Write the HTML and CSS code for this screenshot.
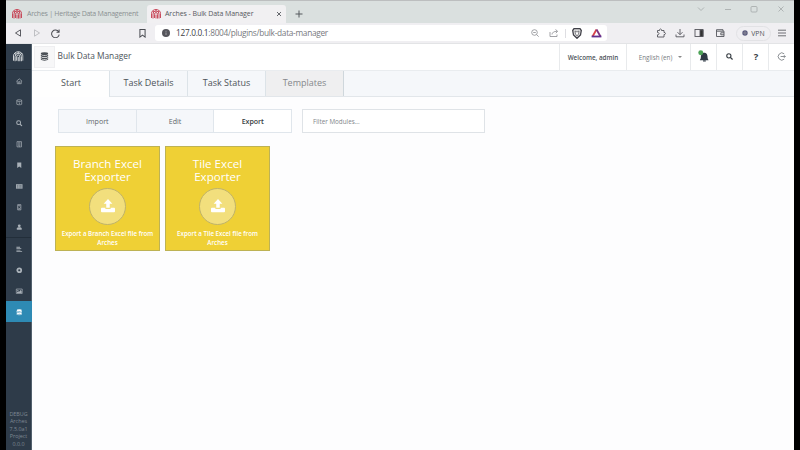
FILE: index.html
```html
<!DOCTYPE html>
<html lang="en">
<head>
<meta charset="utf-8">
<title>Arches - Bulk Data Manager</title>
<link rel="stylesheet" href="styles.css">
</head>
<body>
<svg width="0" height="0" class="defs">
  <symbol id="arch" viewBox="0 0 20 20"><path d="M1 18V9a9 8 0 0 1 18 0v9M4 19V10a6 6 0 0 1 12 0v9M7 18v-7a3 4 0 0 1 6 0v8M10 11v8M3 4l3 2M10 1v4M17 4l-3 2" fill="none" stroke="currentColor" stroke-width="1.9"/></symbol>
  <symbol id="db" viewBox="0 0 16 16"><ellipse cx="8" cy="3" rx="6.5" ry="2.4"/><path d="M1.5 5c2 2 11 2 13 0v2.500c-2 2-11 2-13 0zM1.500 8.700c2 2 11 2 13 0v2.300c-2 2-11 2-13 0zM1.500 12.200c2 2 11 2 13 0V13.500c-2 2.700-11 2.700-13 0z"/></symbol>
  <symbol id="search" viewBox="0 0 16 16"><circle cx="6.500" cy="6.500" r="4.800" fill="none" stroke="currentColor" stroke-width="2.500"/><path d="M10 10l5 5" stroke="currentColor" stroke-width="3"/></symbol>
  <symbol id="upload" viewBox="0 0 16 16"><path d="M8 0l5 5.500h-3V10H6V5.500H3zM1 10h4v1.500h6V10h4a1 1 0 0 1 1 1v3a1 1 0 0 1-1 1H1a1 1 0 0 1-1-1v-3a1 1 0 0 1 1-1z"/></symbol>
</svg>
<div class="window">
  <div class="tabstrip">
    <div class="btab"><svg class="fav"><use href="#arch"/></svg><span class="bt1">Arches | Heritage Data Management</span></div>
    <div class="btab current"><svg class="fav"><use href="#arch"/></svg><span class="bt2">Arches - Bulk Data Manager</span><svg class="close" viewBox="0 0 6 6"><path d="M1 1l4 4M5 1L1 5"/></svg></div>
    <svg class="plus" viewBox="0 0 8 8"><path d="M4 .5v7M.5 4h7"/></svg>
    <div class="controls">
      <svg viewBox="0 0 8 8"><path d="M1 2.500l3 3 3-3"/></svg>
      <svg viewBox="0 0 8 8"><path d="M1 4.500h6"/></svg>
      <svg viewBox="0 0 8 8"><rect x="1" y="1.500" width="6" height="5.500" rx="1"/></svg>
      <svg viewBox="0 0 8 8"><path d="M1.500 1.500l5 5M6.500 1.500l-5 5"/></svg>
    </div>
  </div>
  <div class="toolbar">
    <svg class="nav back" viewBox="0 0 8 8"><path d="M6.500.8v6.400L1.500 4z"/></svg>
    <svg class="nav fwd" viewBox="0 0 8 8"><path d="M1.500.8v6.400L6.500 4z"/></svg>
    <svg class="nav reload" viewBox="0 0 8 8"><path d="M6.800 2.500A3.400 3.400 0 1 0 7.300 5M7.200.5v2.300H4.900"/></svg>
    <svg class="nav mark" viewBox="0 0 8 8"><path d="M1.700.5h4.600v6.700L4 5.500 1.700 7.200z"/></svg>
    <div class="address">
      <svg class="info" viewBox="0 0 8 8"><circle cx="4" cy="4" r="4" fill="#55555b"/><path d="M4 3.500v2.500M4 1.800v1" stroke="#a0a0a5"/></svg>
      <span class="url"><b>127.0.0.1</b>:8004/plugins/bulk-data-manager</span>
      <svg class="zoomout" viewBox="0 0 8 8"><circle cx="3.500" cy="3.500" r="2.800"/><path d="M5.600 5.600L7.700 7.700M2.200 3.500h2.600"/></svg>
      <svg class="share" viewBox="0 0 10 8"><path d="M1 3v4.500h7V5.500M3 5.500c0-2 2-3.200 5-3.200M6.500.5L8.700 2.300 6.800 4.200"/></svg>
      <i class="sep"></i>
      <svg class="shield" viewBox="0 0 10 11"><path d="M2 .7h6l1.300 1.800L8.500 7 5 10.300 1.500 7 .7 2.500z" fill="#ddd" stroke="#414149" stroke-width="1.300"/><path d="M3 3l2 1 2-1-.5 3L5 8 3.500 6z" fill="#fff" stroke="#55555b" stroke-width=".7"/></svg>
      <svg class="bat" viewBox="0 0 11 10"><path d="M5.500 1.500L1.500 8.500" stroke="#d9434a"/><path d="M5.500 1.500l4 7" stroke="#7d3480"/><path d="M.6 8.500h9.800" stroke="#62318e"/></svg>
    </div>
    <div class="tools">
      <svg viewBox="0 0 10 10"><path d="M1.500 2.500h2c-.5-2 2.500-2 2 0h2.500v2c2-.5 2 2.500 0 2v2.500h-6.500V6.800c2 .3 2-2.600 0-2.300z"/></svg>
      <svg viewBox="0 0 10 10"><path d="M5 1v5.500M2.500 4.200L5 6.700l2.500-2.500M1 6.500v2.300h8V6.500"/></svg>
      <svg viewBox="0 0 10 10"><rect x="1" y="1.500" width="8" height="7"/><path d="M6 2h3v6.500H6z" fill="#333"/></svg>
      <svg class="wallet" viewBox="0 0 10 10"><path d="M8 3V1.700H1.500v6.800H9V3.200H1.500M9 4.800H5.800v2H9"/></svg>
    </div>
    <div class="vpn"><svg viewBox="0 0 6 6"><circle cx="3" cy="3" r="2.700" fill="#58587c"/><path d="M.5 3h5M3 .5v5" stroke="#aaa" stroke-width=".5"/></svg><span>VPN</span></div>
    <svg class="burger" viewBox="0 0 8 8"><path d="M0 1.200h8M0 4h8M0 6.800h8"/></svg>
  </div>
  <div class="app">
    <nav class="side">
      <div class="logo"><svg><use href="#arch"/></svg></div>
      <a><svg viewBox="0 0 16 16"><path d="M1 8l7-6 7 6M3 7v7h10V7M6.500 14V9h3v5" class="ln"/></svg></a>
      <a><svg viewBox="0 0 16 16"><path d="M2 3l3-1h6l3 1v10l-3 1H5l-3-1zM2 4l3 2h6l3-2M8 8v3h2" class="ln"/></svg></a>
      <a><svg><use href="#search"/></svg></a>
      <a><svg viewBox="0 0 16 16"><path d="M2.500 1.500h11v13h-11zM5 4.500h6M5 7.500h6M5 10.500h6M8 12v3" class="ln"/></svg></a>
      <a><svg viewBox="0 0 16 16"><path d="M3 1h10v14l-5-4-5 4z"/></svg></a>
      <a><svg viewBox="0 0 16 16"><path d="M0 3h16v11H0z"/><path d="M2 6h4M2 9h4M2 12h4M8 6h6M8 9h6M8 12h6" stroke="#2d3b49"/></svg></a>
      <a><svg viewBox="0 0 16 16"><path d="M4 1.500h8v13H4zM6.500 2v3h3V2M6.500 14v-3h3v3M4 8h2M10 8h2" class="ln"/></svg></a>
      <a class="last"><svg viewBox="0 0 16 16"><circle cx="8" cy="4.500" r="3.500"/><path d="M2 14V11q1-3 4-3h4q3 0 4 3v3z"/></svg></a>
      <a><svg viewBox="0 0 16 16"><path d="M1 2h9v2H1zM1 5.500h12v2H1zM1 9h10v2H1zM1 12h14v2H1z"/></svg></a>
      <a><svg viewBox="0 0 16 16"><circle cx="8" cy="8" r="4.800" fill="none" stroke="currentColor" stroke-width="4.400"/></svg></a>
      <a><svg viewBox="0 0 16 16"><path d="M.8 2.500h14.500v11H.8z" class="ln"/><circle cx="4.500" cy="6" r="1.500"/><path d="M2.500 12V10l3-2 2 1 4-4 2.500 3v4z"/></svg></a>
      <a class="active"><svg><use href="#db"/></svg></a>
      <p>DEBUG<br>Arches<br>7.5.0a1<br>Project<br>0.0.0</p>
    </nav>
    <main>
      <header>
        <div class="hicon"><svg><use href="#db"/></svg></div>
        <h1>Bulk Data Manager</h1>
        <div class="cell welcome"><span>Welcome, admin</span></div>
        <div class="cell lang"><span>English (en)</span><i></i></div>
        <div class="cell"><svg class="bell" viewBox="0 0 12 13"><path d="M7.500 3q3 .5 3 6l1 2H2l1-2q0-5.500 3-6zM5.500 11.500h3v1h-3z" fill="#2e3944"/><circle cx="3" cy="3" r="2.700" fill="#4da357"/></svg></div>
        <div class="cell"><svg class="find"><use href="#search"/></svg></div>
        <div class="cell help"><span>?</span></div>
        <div class="cell out"><svg viewBox="0 0 10 10"><path d="M8 2A4 4 0 1 0 8 8M4 5h5.200M7.700 3.500L9.200 5 7.700 6.500"/></svg></div>
      </header>
      <div class="tabs">
        <div class="tab on"><span>Start</span></div>
        <div class="tab"><span>Task Details</span></div>
        <div class="tab"><span>Task Status</span></div>
        <div class="tab off"><span>Templates</span></div>
      </div>
      <div class="filters">
        <div class="seg"><span>Import</span><span>Edit</span><span class="on">Export</span></div>
        <div class="filter">Filter Modules...</div>
      </div>
      <div class="cards">
        <div class="card"><h2>Branch Excel<br>Exporter</h2><div class="circle"><svg><use href="#upload"/></svg></div><p>Export a Branch Excel file from<br>Arches</p></div>
        <div class="card"><h2>Tile Excel<br>Exporter</h2><div class="circle"><svg><use href="#upload"/></svg></div><p>Export a Tile Excel file from<br>Arches</p></div>
      </div>
    </main>
  </div>
</div>
</body>
</html>
```
FILE: styles.css
```css
* { box-sizing: border-box; }
body { margin: 0; background: #000; font-family: "Open Sans", sans-serif; color: #4d5359; overflow: hidden; }
svg { display: block; flex: none; fill: currentColor; }
h1, h2, p { margin: 0; font-weight: 400; }
span { white-space: nowrap; }
.defs { position: absolute; }
.window { width: 788px; height: 450px; margin-left: 6px; display: flex; flex-direction: column; background: #fdfdfe; }

.tabstrip { height: 23px; display: flex; background: #dae0df; border-top: 1px solid #bcbebf; padding-top: 4px; font-size: 7px; color: #8a9092; }
.btab { width: 141px; display: flex; align-items: center; padding-left: 6px; }
.btab.current { width: 139px; background: #f1f0f2; color: #55585d; border-radius: 3px 3px 0 0; padding-left: 4px; }
.fav { width: 10px; height: 10px; margin-right: 5px; color: #c64254; }
.btab span { margin-top: -1px; }
.bt1 { letter-spacing: -.26px; }
.current .fav { margin-right: 4px; }
.current .bt2 { width: 90px; font-weight: 500; letter-spacing: -.07px; }
.close { width: 6px; height: 6px; margin-left: 21px; stroke: #55585d; stroke-width: .9; }
.plus { width: 8px; height: 8px; margin: 5px 0 0 9px; stroke: #55585d; }
.controls { margin: 0 9px 0 auto; display: flex; gap: 18.700px; }
.controls svg { width: 8px; height: 8px; fill: none; stroke: #a3a8a8; stroke-width: .8; }

.toolbar { height: 21px; display: flex; align-items: center; background: #f0eff2; border-bottom: 1px solid #e3e4e6; }
.nav { width: 8px; height: 8px; fill: none; stroke: #4b4c52; stroke-width: .9; }
.back { margin-left: 8px; }
.fwd { margin-left: 11px; stroke: #b9babe; }
.reload { margin-left: 10px; width: 9px; height: 9px; }
.mark { margin-left: 78px; width: 9px; height: 9px; }
.address { width: 452px; height: 16px; margin-left: 8px; display: flex; align-items: center; background: #fff; border-radius: 3px; padding-left: 7px; }
.info { width: 8px; height: 8px; }
.url { width: 355px; margin: -1px 0 0 6px; font-size: 8.300px; letter-spacing: -.3px; color: #77797e; }
.url b { font-weight: 400; color: #3e4045; }
.address .zoomout, .address .share { fill: none; stroke: #8a8c91; stroke-width: .8; }
.zoomout { width: 8px; height: 8px; }
.share { width: 10px; height: 8px; margin-left: 10px; }
.sep { width: 1px; height: 9px; margin-left: 6px; background: #dedee2; }
.shield { width: 10px; height: 11px; margin-left: 6px; }
.bat { width: 11px; height: 10px; margin-left: 9px; stroke-width: 1.800; fill: none; }
.tools { margin-left: 49px; display: flex; gap: 9px; }
.tools svg { width: 10px; height: 10px; fill: none; stroke: #55565c; stroke-width: .9; }
.tools .wallet { margin-left: 2px; }
.vpn { width: 35px; height: 15px; margin-left: 11px; display: flex; align-items: center; justify-content: center; gap: 3px; border: 1px solid #e2e2e5; border-radius: 8px; font-size: 6.900px; color: #55565c; }
.vpn svg { width: 6px; height: 6px; }
.burger { width: 8px; height: 8px; margin-left: 7px; stroke: #606167; stroke-width: .9; }

.app { flex: 1; min-height: 0; display: flex; }
.side { width: 26px; background: #2e3b49; border-right: 1px solid #52606d; display: flex; flex-direction: column; color: #a9b1b8; }
.logo { height: 26px; display: flex; align-items: center; justify-content: center; border-bottom: 1px solid #222e3a; }
.logo svg { width: 10.500px; height: 11px; color: #d5d9dc; }
.side a { height: 21px; display: flex; align-items: center; justify-content: center; padding: 1px 0 0 1px; }
.side a svg { width: 6.500px; height: 6.500px; overflow: visible; }
.side .ln { fill: none; stroke: currentColor; stroke-width: 1.700; }
.side .last { border-bottom: 1px solid #222e3a; }
.side .active { width: 26px; background: #2e8ab4; color: #fff; }
.side p { margin-top: auto; padding-bottom: 2px; font-size: 5.400px; line-height: 7.500px; text-align: center; color: #7e8993; }

main { flex: 1; display: flex; flex-direction: column; }
header { height: 26px; display: flex; align-items: center; background: #fff; }
.hicon { width: 21px; height: 22px; margin: -1px 0 0 2px; display: flex; align-items: center; justify-content: center; background: #f7f7f8; border: 1px solid #efeff1; }
.hicon svg { width: 9px; height: 9px; color: #4b5056; }
h1 { margin: -3px auto 0 2.600px; font-size: 8.400px; letter-spacing: -.04px; }
.cell { width: 26px; height: 26px; display: flex; align-items: center; justify-content: center; border-left: 1px solid #e8eaec; }
.cell.welcome { width: 67px; font-size: 6.300px; font-weight: 600; }
.cell.lang { width: 64px; font-size: 6.300px; color: #777c81; gap: 6px; padding-left: 4px; }
.lang i { border: 2px solid transparent; border-top: 2px solid #888; border-bottom: 0; }
.bell { width: 11px; height: 12px; margin-top: -3px; }
.find { width: 7px; height: 7px; margin-top: -1px; color: #373d43; }
.help { font-size: 9.500px; font-weight: 700; color: #373d43; }
.help span { margin: -2px 0 0 1px; }
.out svg { width: 9px; height: 9px; margin-top: -1px; fill: none; stroke: #73787d; stroke-width: .9; }

.tabs { height: 27px; display: flex; background: #f5f7fa; border-top: 1px solid #e9ecef; border-bottom: 1px solid #e2e6ea; font-size: 9px; }
.tab { width: 78px; display: flex; align-items: center; justify-content: center; border-right: 1px solid #dce3e8; }
.tab span { margin-top: -2px; }
.tab.on span { padding-left: 1px; margin-top: -3px; }
.tab.on { height: 26px; background: #fefefe; }
.tab.off { background: #efeff0; color: #85888c; border-right-color: #cfd7dc; }

.filters { display: flex; margin: 12px 0 0 26px; gap: 10px; height: 24px; font-size: 7.100px; }
.seg { display: flex; width: 234px; border: 1px solid #e0e6ec; background: #f5f7fa; }
.seg span { flex: 1; display: flex; align-items: center; justify-content: center; color: #62676c; }
.seg span + span { border-left: 1px solid #e0e6ec; }
.seg .on { background: #fff; color: #373c42; font-weight: 600; letter-spacing: -.1px; }
.filter { width: 183px; border: 1px solid #dfe3e7; background: #fff; padding-left: 10px; display: flex; align-items: center; font-size: 6.300px; color: #81858a; }

.cards { display: flex; gap: 5px; margin: 13px 0 0 23px; }
.card { width: 105px; height: 105px; background: #efd035; border: 1px solid #bdb254; color: #fff; text-align: center; display: flex; flex-direction: column; align-items: center; padding-top: 10px; }
h2 { font-size: 11.600px; line-height: 13px; }
.circle { width: 37px; height: 37px; margin-top: 5px; display: flex; align-items: center; justify-content: center; background: #f2df7d; border: 1px solid #bfb36a; border-radius: 50%; }
.circle svg { width: 14px; height: 14px; margin-top: -2px; }
.card p { margin-top: 4px; font-size: 6.200px; font-weight: 600; line-height: 9px; }
```
